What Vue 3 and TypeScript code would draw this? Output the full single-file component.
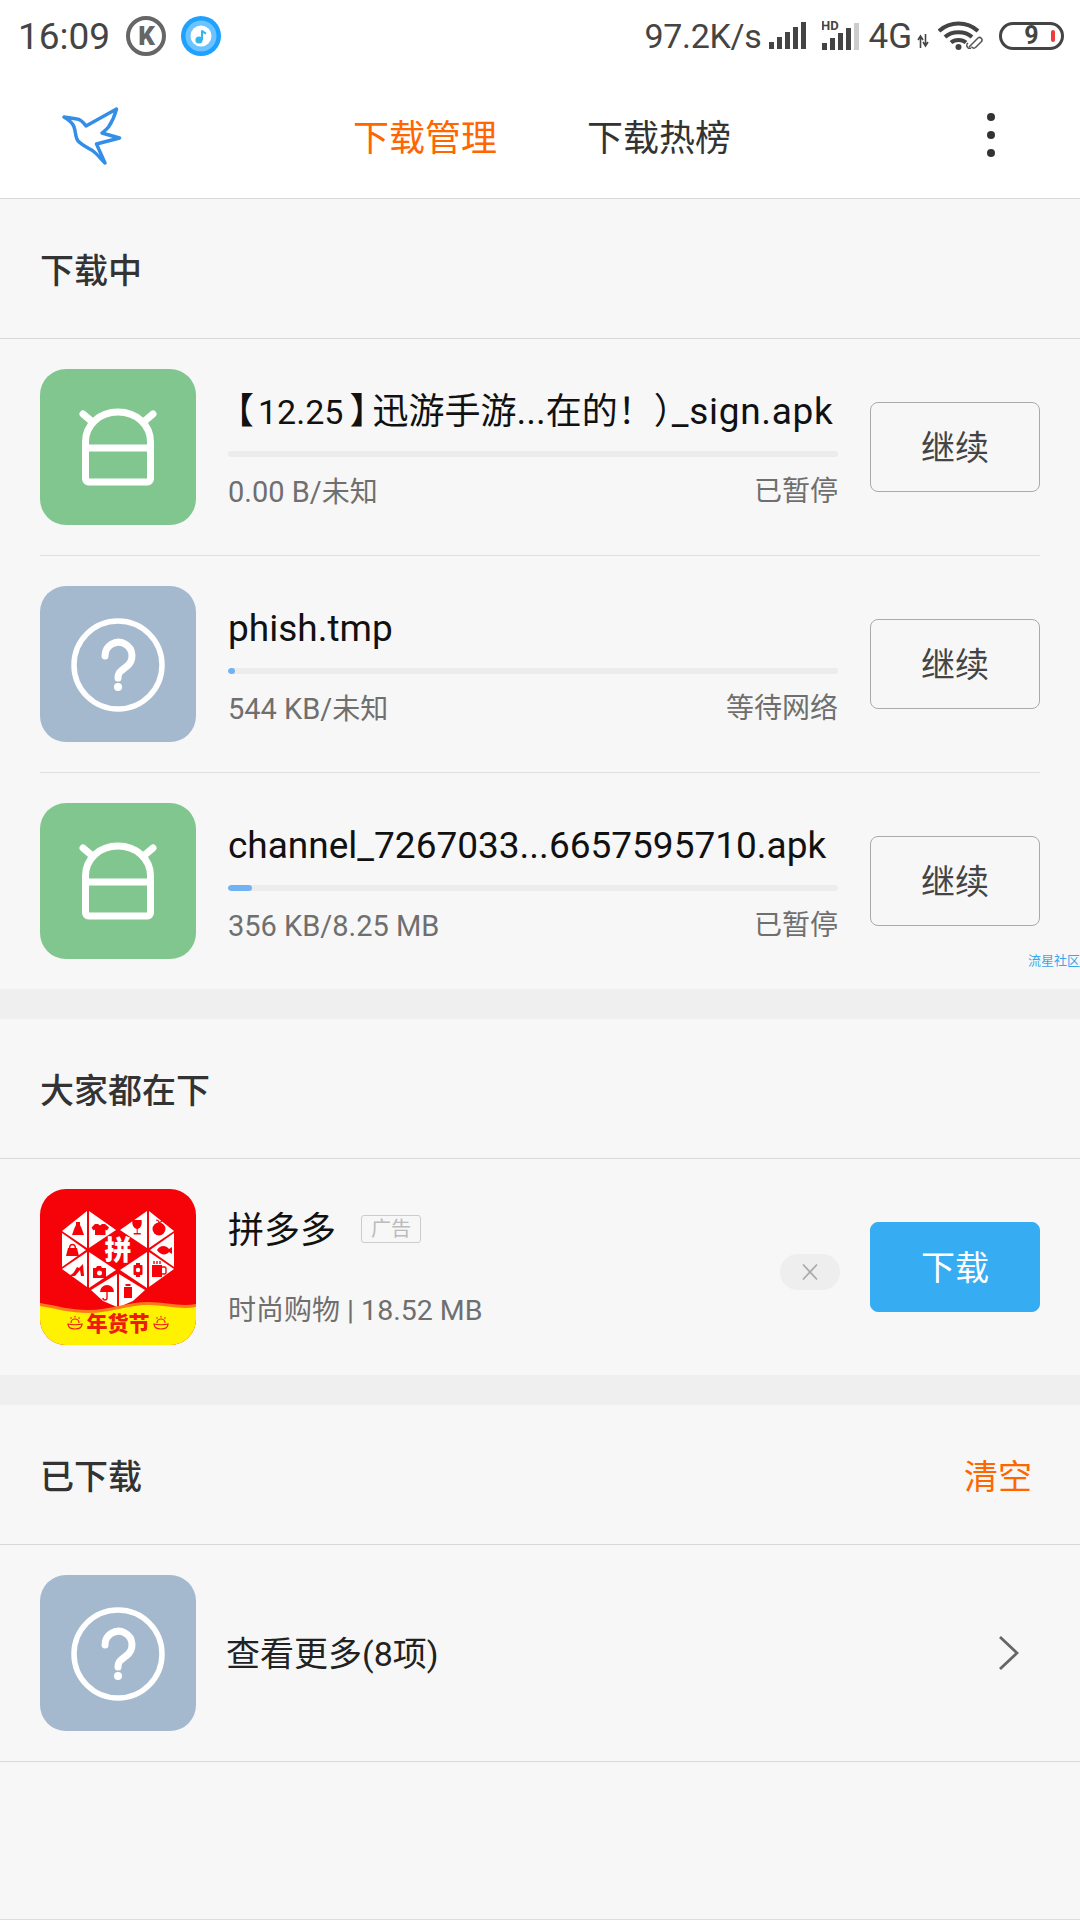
<script setup lang="ts">
import { ref } from "vue";

type Kind = "android" | "unknown";
interface Seg { t: string; c?: string }

const activeTab = ref(0);
const tabs = ["下载管理", "下载热榜"];

const downloads: { kind: Kind; name: Seg[]; size: string; state: string; pct: number }[] = [
  {
    kind: "android",
    name: [
      { t: "【", c: "half open" },
      { t: "12.25", c: "digits" },
      { t: "】", c: "half close" },
      { t: "迅游手游", c: "cjk" },
      { t: "..." },
      { t: "在的！", c: "cjk" },
      { t: "）", c: "half" },
      { t: "_sign.apk", c: "tail" },
    ],
    size: "0.00 B/未知",
    state: "已暂停",
    pct: 0,
  },
  { kind: "unknown", name: [{ t: "phish.tmp" }], size: "544 KB/未知", state: "等待网络", pct: 1.2 },
  { kind: "android", name: [{ t: "channel_7267033...6657595710.apk" }], size: "356 KB/8.25 MB", state: "已暂停", pct: 4 },
];

const signalBars = [
  { x: 0, y: 20, h: 7 },
  { x: 8, y: 15, h: 12 },
  { x: 16, y: 10, h: 17 },
  { x: 24, y: 5, h: 22 },
  { x: 32, y: 0, h: 27 },
];

function runs(text: string) {
  return (text.match(/[\u3000-\u9fff\uff00-\uffef]+|[^\u3000-\u9fff\uff00-\uffef]+/g) ?? []).map((t) => ({
    t,
    cjk: /[\u3000-\u9fff\uff00-\uffef]/.test(t),
  }));
}
</script>

<template>
  <div class="page">
    <div class="status-bar">
      <div class="status-left">
        <span class="time">16:09</span>
        <svg class="notif" width="40" height="40" viewBox="0 0 40 40">
          <circle cx="20" cy="20" r="18" fill="none" stroke="#666" stroke-width="4" />
          <text x="20.500" y="29" text-anchor="middle" class="k-letter">K</text>
        </svg>
        <svg class="notif" width="40" height="40" viewBox="0 0 40 40">
          <circle cx="20" cy="20" r="20" fill="#1ea1ff" />
          <circle cx="20" cy="20" r="15.500" fill="#6cc3ff" />
          <circle cx="20" cy="20" r="10.500" fill="#fff" />
          <circle cx="18" cy="24" r="3.600" fill="#33b6f0" />
          <path d="M21 24V14.500c1 2 3 2.500 4 3" fill="none" stroke="#33b6f0" stroke-width="2" />
        </svg>
      </div>
      <div class="status-right">
        <span class="speed">97.2K/s</span>
        <svg width="38" height="28" viewBox="0 0 38 28">
          <rect v-for="b in signalBars" :key="b.x" :x="b.x" :y="b.y" width="5" :height="b.h" fill="#444" />
        </svg>
        <svg class="sim2" width="38" height="30" viewBox="0 0 38 30">
          <text x="-1" y="10" class="hd">HD</text>
          <rect v-for="(b, i) in signalBars" :key="b.x" :x="b.x" :y="b.y + 3" width="5" :height="b.h" :fill="i === 4 ? '#ccc' : '#444'" />
        </svg>
        <span class="net">4G</span>
        <svg class="arrows" width="12" height="14" viewBox="0 0 12 14">
          <path d="M3.500 14V3M1 6l2.500-4L6 6M8.500 0v11M6 8l2.500 4L11 8" fill="none" stroke="#444" stroke-width="1.600" />
        </svg>
        <svg class="wifi" width="46" height="30" viewBox="0 0 46 30">
          <path d="M1 11C12 1 29 1 40 11M7 17c7-6.500 20-6.500 27 0M13 22.500c4-3.500 11-3.500 15 0" fill="none" stroke="#444" stroke-width="4" />
          <circle cx="20.500" cy="27" r="3" fill="#444" />
          <path d="M31 27l9-9a2.500 2.500 0 0 1 3.500 3.500l-6 6a2.500 2.500 0 0 1-4-1M30 23l-1 1a3 3 0 0 0 4 4" fill="none" stroke="#555" stroke-width="1.500" />
        </svg>
        <div class="battery">
          <span>9</span>
          <i></i>
        </div>
      </div>
    </div>

    <div class="nav-bar">
      <svg class="bird" width="64" height="64" viewBox="0 0 64 64">
        <path d="M2 12L15 14c2 0 6 3 9 7L54.500 4c-1.500 6-4 12-8 18-2 2.500-4 4-6.500 6l17.500 5-23 6 8.500 19c-4-4-8-9-12-12-5-3-11-6-15-10-3-4-2-9-4-14-1-4-5-7-10-10z" fill="none" stroke="#348ee6" stroke-width="3.400" stroke-linejoin="round" stroke-linecap="round" />
      </svg>
      <div class="tabs">
        <span v-for="(t, i) in tabs" :key="t" class="tab" :class="{ active: i === activeTab }" @click="activeTab = i">{{ t }}</span>
      </div>
      <div class="more"><i></i><i></i><i></i></div>
    </div>

    <section class="section">
      <div class="section-head"><span>下载中</span></div>
      <div v-for="(d, i) in downloads" :key="d.size" class="row" :class="{ last: i === downloads.length - 1 }">
        <div class="app-icon" :class="d.kind">
          <svg v-if="d.kind === 'android'" width="156" height="156" viewBox="0 0 156 156">
            <path d="M45.500 110V73c0-17 14-30 32.500-30s32.500 13 32.500 30v37a3 3 0 0 1-3 3h-59a3 3 0 0 1-3-3zM45.500 79h65M43 45l9.500 8M113 45l-9.500 8" fill="none" stroke="#fff" stroke-width="7" stroke-linejoin="round" stroke-linecap="round" />
          </svg>
          <svg v-else width="156" height="156" viewBox="0 0 156 156">
            <circle cx="78" cy="79" r="44" fill="none" stroke="#fff" stroke-width="5.500" />
            <path d="M65 70a13.500 13.500 0 1 1 21 11c-5 4-8 5-8 11" fill="none" stroke="#fff" stroke-width="7" stroke-linecap="round" />
            <circle cx="78" cy="101" r="4" fill="#fff" />
          </svg>
        </div>
        <div class="info">
          <div class="name"><span v-for="s in d.name" :key="s.t" :class="s.c">{{ s.t }}</span></div>
          <div class="track"><div class="fill" :style="{ width: d.pct + '%' }"></div></div>
          <div class="meta">
            <span><span v-for="r in runs(d.size)" :key="r.t" :class="{ small: r.cjk }">{{ r.t }}</span></span>
            <span class="small">{{ d.state }}</span>
          </div>
        </div>
        <button class="btn">继续</button>
      </div>
      <span class="watermark">流星社区</span>
    </section>

    <div class="gap"></div>

    <section class="section">
      <div class="section-head"><span>大家都在下</span></div>
      <div class="row last">
        <svg class="pdd" width="156" height="156" viewBox="0 0 156 156">
          <rect width="156" height="156" fill="#f60209" />
          <g fill="#fff">
            <polygon points="47,22 22,42 47,59" />
            <polygon points="49,22 49,59 76,41" />
            <polygon points="22,44 22,78 46,61" />
            <polygon points="22,80 47,63 47,98" />
            <polygon points="49,63 76,81 49,99" />
            <polygon points="51,101 77,85 77,118 63,112" />
            <polygon points="109,22 134,42 109,59" />
            <polygon points="107,22 107,59 80,41" />
            <polygon points="134,44 134,78 110,61" />
            <polygon points="134,80 109,63 109,98" />
            <polygon points="107,63 80,81 107,99" />
            <polygon points="105,101 79,85 79,118 93,112" />
          </g>
          <g fill="#f60209">
            <!-- dress -->
            <path d="M36 33h4v3l1.500 3 2.500 7H32l2.500-7 1.500-3z" />
            <!-- tee -->
            <path d="M55 35l3 0 2 1.500L62 35h3l4 3.500-2 3-1.500-1V46H55v-5.500l-1.500 1-2-3z" />
            <!-- bag -->
            <path d="M28 59h9l2 8H26z" />
            <path d="M29.500 60c0-6 6-6 6 0" fill="none" stroke="#f60209" stroke-width="1.400" />
            <!-- shoe -->
            <path d="M43 75l1 12h-3l-1-6-5 6h-4l-1-1c4-1 5-5 7-8l2 1z" />
            <!-- camera -->
            <path d="M53 79h3l1-2h4l1 2h4v10H53z" />
            <circle cx="59.500" cy="84" r="2.500" fill="#fff" />
            <!-- umbrella -->
            <path d="M60 103a7 7 0 0 1 14 0z" />
            <path d="M67 103v6a2 2 0 0 1-4 0" fill="none" stroke="#f60209" stroke-width="1.400" />
            <!-- box -->
            <path d="M84 98h8v11h-8z" />
            <path d="M85.500 95h5v2h-5z" />
            <!-- watch -->
            <path d="M96 74h4v2h1.500a1 1 0 0 1 1 1v8a1 1 0 0 1-1 1H100v2h-4v-2h-1.500a1 1 0 0 1-1-1v-8a1 1 0 0 1 1-1H96z" />
            <circle cx="98" cy="81" r="2.200" fill="#fff" />
            <!-- mug -->
            <path d="M112 76h10v12h-10z" />
            <path d="M122 78h2.500a1.500 1.500 0 0 1 1.500 1.500v4a1.500 1.500 0 0 1-1.500 1.500H122" fill="none" stroke="#f60209" stroke-width="1.400" />
            <path d="M114 72v3M117 72v3M120 72v3" stroke="#f60209" stroke-width="1.400" />
            <!-- fish -->
            <path d="M117 61c3-5 9-5 12-1l3-2v7l-3-2c-3 4-9 3-12-2z" />
            <!-- apple -->
            <circle cx="119" cy="40" r="6.500" />
            <path d="M119 34c0-2-1-3-3-3M119 34l3-2" fill="none" stroke="#f60209" stroke-width="1.200" />
            <!-- glass -->
            <path d="M92.500 31h9c1 5-1 8-3.800 9v4h3v1.500h-7V44h3v-4c-2.800-1-5.200-4-4.200-9z" />
          </g>
          <text x="78" y="71" text-anchor="middle" class="pin">拼</text>
          <path d="M0 114c18 3 30 7 48 7 22 0 40-8 60-8 18 0 32 5 48 2v41H0z" fill="#ff7a1a" />
          <path d="M0 117c18 3 30 7 48 7 22 0 40-8 60-8 18 0 32 5 48 2v38H0z" fill="#fff200" />
          <text x="78" y="142" text-anchor="middle" class="festival">年货节</text>
          <g fill="none" stroke="#ed1c0c" stroke-width="1.200">
            <path d="M28 135c3 1 11 1 14 0 0 4-3 5-7 5s-7-1-7-5zM31 134a4 4 0 0 1 8 0M35 127v1.500M30.500 128.500l1 1M39.500 128.500l-1 1" />
            <path d="M114 135c3 1 11 1 14 0 0 4-3 5-7 5s-7-1-7-5zM117 134a4 4 0 0 1 8 0M121 127v1.500M116.500 128.500l1 1M125.500 128.500l-1 1" />
          </g>
        </svg>
        <div class="info ad-info">
          <div class="ad-title"><span class="name ad-name">拼多多</span><span class="ad-tag">广告</span></div>
          <div class="ad-meta"><span class="small">时尚购物</span> | 18.52 MB</div>
        </div>
        <div class="dismiss">
          <svg width="20" height="18" viewBox="0 0 20 18"><path d="M3 1.500l14 15M17 1.500L3 16.500" stroke="#aaa" stroke-width="1.800" /></svg>
        </div>
        <button class="btn primary">下载</button>
      </div>
    </section>

    <div class="gap"></div>

    <section class="section grow">
      <div class="section-head"><span>已下载</span><span class="clear">清空</span></div>
      <div class="row more-row">
        <div class="app-icon unknown">
          <svg width="156" height="156" viewBox="0 0 156 156">
            <circle cx="78" cy="79" r="44" fill="none" stroke="#fff" stroke-width="5.500" />
            <path d="M65 70a13.500 13.500 0 1 1 21 11c-5 4-8 5-8 11" fill="none" stroke="#fff" stroke-width="7" stroke-linecap="round" />
            <circle cx="78" cy="101" r="4" fill="#fff" />
          </svg>
        </div>
        <div class="more-text">查看更多(8项)</div>
        <svg class="chevron" width="22" height="36" viewBox="0 0 22 36"><path d="M2 2l17 16L2 34" fill="none" stroke="#666" stroke-width="2.800" /></svg>
      </div>
    </section>
  </div>
</template>

<style>
html, body { margin: 0; background: #f7f7f7; }
</style>

<style scoped>
.page {
  width: 1080px; height: 1920px; display: flex; flex-direction: column; overflow: hidden;
  background: #f7f7f7; border-bottom: 1px solid #ddd; box-sizing: border-box;
  font-family: Roboto, "Noto Sans CJK SC", sans-serif; color: #111; position: relative;
}

.status-bar {
  height: 72px; background: #fff; display: flex; align-items: center; justify-content: space-between;
  padding: 0 16px 0 18px; box-sizing: border-box; color: #444; flex: none;
}
.status-left { display: flex; align-items: center; }
.time { font-size: 37px; margin-right: 16px; }
.notif { margin-right: 15px; }
.k-letter { font: 900 26px Roboto, sans-serif; fill: #666; }
.status-right { display: flex; align-items: center; }
.speed { font-size: 34px; margin-right: 8px; letter-spacing: -.3px; }
.sim2 { margin-left: 15px; margin-top: -2px; }
.hd { font: 700 13px Roboto, sans-serif; fill: #444; }
.net { font-size: 35px; margin-left: 8px; }
.arrows { margin: 10px 0 0 5px; }
.wifi { margin-left: 9px; margin-top: -2px; }
.battery {
  width: 65px; height: 28px; margin-left: 15px; border: 3px solid #444; border-radius: 14px;
  box-sizing: border-box; display: flex; align-items: center; justify-content: center; position: relative;
}
.battery span { font-size: 25px; font-weight: 700; color: #444; line-height: 22px; }
.battery i { position: absolute; right: 6px; top: 5px; width: 4px; height: 12px; border-radius: 2px; background: #ee3c3c; }

.nav-bar {
  height: 127px; background: #fff; border-bottom: 1px solid #d8d8d8; box-sizing: border-box;
  display: flex; align-items: center; position: relative; flex: none;
}
.bird { margin-left: 62px; margin-top: 4px; }
.tabs { display: flex; gap: 90px; margin-left: 227px; }
.tab { font-size: 36px; color: #333; }
.tab.active { color: #ff6600; }
.more { margin-left: auto; margin-right: 85px; display: flex; flex-direction: column; gap: 10px; }
.more i { display: block; width: 8px; height: 8px; border-radius: 50%; background: #333; }

.section { position: relative; flex: none; }
.section.grow { flex: 1; }
.section-head {
  height: 140px; box-sizing: border-box; border-bottom: 1px solid #d8d8d8; padding: 0 48px 0 40px;
  display: flex; align-items: center; justify-content: space-between;
  font-size: 34px; font-weight: 500; color: #333;
}
.clear { font-weight: 400; color: #ff6600; }

.row {
  display: flex; align-items: center; margin: 0 40px; padding: 30px 0; height: 217px;
  box-sizing: border-box; border-bottom: 1px solid #e0e0e0;
}
.row.last { border-bottom: none; height: 216px; }
.more-row { margin: 0; padding: 30px 0 30px 40px; border-bottom: 1px solid #d8d8d8; }

.app-icon { width: 156px; height: 156px; border-radius: 26px; flex: none; }
.app-icon svg { display: block; }
.app-icon.android { background: #82c68f; }
.app-icon.unknown { background: #a5b9ce; }
.pdd { border-radius: 26px; flex: none; }
.pin { font: 900 27px "Noto Sans CJK SC", sans-serif; fill: #fff; }
.festival { font: 900 21px "Noto Sans CJK SC", sans-serif; fill: #ed1c0c; }

.info { width: 610px; margin-left: 32px; flex: none; padding-top: 12px; }
.name { font-size: 37px; line-height: 44px; height: 44px; white-space: nowrap; color: #111; margin-top: -5px; }
.name .cjk { font-size: 36px; }
/* half-width punctuation, the full-width boxes of the CJK font are too loose here */
.name .half { font-size: 36px; font-feature-settings: "halt"; }
.name .open { margin-left: 8px; margin-right: 4px; }
.name .digits { font-size: 34px; }
.name .close { margin-left: 6px; margin-right: 5px; }
.name .tail { letter-spacing: .7px; }
.track { height: 6px; margin-top: 17px; border-radius: 3px; background: #ececec; overflow: hidden; }
.fill { height: 100%; background: #70b3f5; border-radius: 3px; min-width: 0; }
.meta { display: flex; justify-content: space-between; margin-top: 16px; font-size: 29px; line-height: 38px; color: #6f6f6f; }
.small { font-size: 28px; }

.btn {
  width: 170px; height: 90px; margin-left: 32px; flex: none; border: 1px solid #aaa; border-radius: 8px;
  background: transparent; font-family: inherit; font-size: 34px; color: #444; padding: 0 0 3px;
}
.btn.primary { background: #36adf3; border-color: #36adf3; color: #fff; margin-left: 30px; }

.ad-info { width: auto; flex: 1; padding-top: 9px; }
.ad-title { display: flex; align-items: center; }
.ad-name { font-size: 36px; margin-top: -4px; }
.ad-tag {
  margin-left: 25px; border: 1px solid #ccc; border-radius: 3px; font-size: 20px; line-height: 26px;
  padding: 0 9px; color: #bbb; margin-top: -8px;
}
.ad-meta { margin-top: 39px; font-size: 28.500px; line-height: 38px; color: #6f6f6f; }
.dismiss {
  width: 60px; height: 36px; border-radius: 18px; background: #eee; flex: none; margin-top: 10px;
  display: flex; align-items: center; justify-content: center;
}

.more-text { margin-left: 30px; margin-top: -4px; font-size: 34px; color: #222; flex: 1; }
.chevron { margin-right: 60px; }

.gap { height: 30px; background: #efefef; flex: none; }

.watermark { position: absolute; right: 0; top: 751px; font-size: 13px; color: #3aa6ee; white-space: nowrap; }
</style>
